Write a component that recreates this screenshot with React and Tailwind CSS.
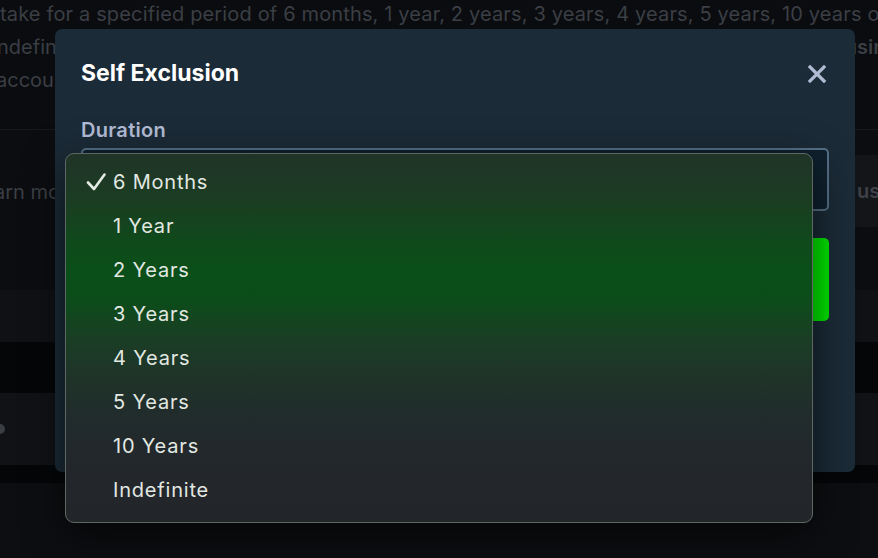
import React from "react";

const durations = ["6 Months", "1 Year", "2 Years", "3 Years", "4 Years", "5 Years", "10 Years", "Indefinite"];

function BackgroundPage() {
  return (
    <div className="flex flex-col w-full h-full text-[20px] text-[#3b3f45]">
      <div className="h-[129px] bg-[#0a0c0f] overflow-hidden">
        <p className="whitespace-nowrap leading-[33px] mt-[-2px] tracking-[0.15px]">take for a specified period of 6 months, 1 year, 2 years, 3 years, 4 years, 5 years, 10 years or</p>
        <div className="flex justify-between">
          <p className="whitespace-nowrap leading-[33px] ml-[-3px]">ndefinitely. During this period you will be unable to</p>
          <p className="whitespace-nowrap leading-[33px] mr-[-20px] pl-3 font-semibold">using</p>
        </div>
        <p className="whitespace-nowrap leading-[30px] ml-[-4px] mt-[1px]">account</p>
      </div>
      <div className="h-px bg-[#16181c]" />
      <div className="h-[122px] bg-[#0b0d10] flex items-center justify-between">
        <span className="whitespace-nowrap ml-[-6px] mt-[2px]">arn more</span>
        <div className="h-[72px] w-[24px] bg-[#131519] flex items-center pl-[3px] font-semibold text-[#3e4248] overflow-hidden whitespace-nowrap">
          usi
        </div>
      </div>
      <div className="h-[38px] bg-[#0b0d10]" />
      <div className="h-[52px] bg-[#0f1114]" />
      <div className="h-[51px] bg-[#040608]" />
      <div className="h-[72px] bg-[#101216] flex items-center">
        <span className="w-[10px] h-[10px] rounded-full bg-[#3a3d42] ml-[-5px]" />
      </div>
      <div className="h-[18px] bg-[#040608]" />
      <div className="flex-1 bg-[#0c0e11]" />
    </div>
  );
}

function Check() {
  return (
    <svg width="20" height="20" viewBox="0 0 20 20" className="shrink-0">
      <path d="M2 10.5 L8 17 L18.5 2.5" fill="none" stroke="#e4eae4" strokeWidth="2.6" strokeLinecap="round" strokeLinejoin="round" />
    </svg>
  );
}

function CloseIcon() {
  return (
    <svg width="20" height="20" viewBox="0 0 20 20">
      <path d="M3 3 L17 17 M17 3 L3 17" stroke="#b1bad3" strokeWidth="3.2" strokeLinecap="square" />
    </svg>
  );
}

export default function App() {
  return (
    <div className="relative w-[878px] h-[558px] overflow-hidden bg-[#0b0d10]" style={{ fontFamily: "Inter, 'Liberation Sans', sans-serif" }}>
      <BackgroundPage />

      {/* modal */}
      <div className="absolute left-[55px] top-[29px] w-[800px] h-[443px] rounded-[7px] bg-[#1b2b37] px-[26px] flex flex-col">
        <div className="h-[89px] flex items-center justify-between">
          <h2 className="text-[23px] font-bold text-white">Self Exclusion</h2>
          <button className="mr-[2px]">
            <CloseIcon />
          </button>
        </div>
        <label className="text-[20px] leading-[24px] font-semibold text-[#b1bad3] tracking-[0.3px]">Duration</label>
        <div className="mt-[6px] h-[63px] rounded-[5px] border-2 border-[#557086] bg-[#0f212e]" />
        <button className="mt-[27px] h-[83px] rounded-[5px] bg-[#00e701]" />
      </div>

      {/* native select popup */}
      <div
        className="absolute left-[65px] top-[153px] w-[748px] h-[370px] rounded-[9px] border border-[#5f6763] pt-[6px] shadow-[0_12px_40px_rgba(0,0,0,0.6)] bg-[linear-gradient(180deg,#203427_0%,#1b3d22_13%,#0f4a1b_24%,#0a4f19_32%,#0c4c1a_40%,#1a3e25_50%,#1f3329_61%,#212b2c_72%,#23262b_88%,#222629_100%)]"
      >
        {durations.map((d, i) => (
          <div key={d} className="h-[44px] flex items-center pl-[20px] text-[20px] text-[#e2e8e2] tracking-[0.8px]">
            <span className="w-[27px] flex">{i === 0 && <Check />}</span>
            <span>{d}</span>
          </div>
        ))}
      </div>
    </div>
  );
}
